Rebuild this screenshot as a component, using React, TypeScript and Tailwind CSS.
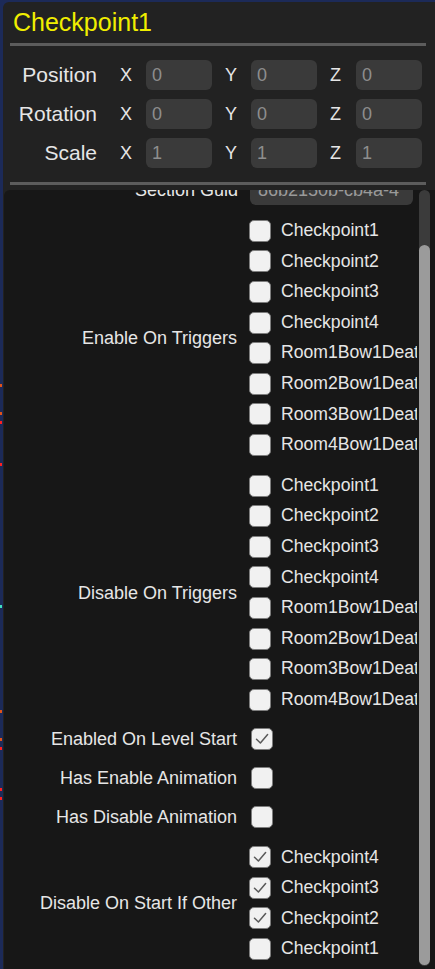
import React from "react";

const font = { fontFamily: '"Liberation Sans", Arial, sans-serif' };

function Check({ checked, className = "" }: { checked?: boolean; className?: string }) {
  return (
    <div
      className={
        "w-[22px] h-[22px] rounded-[5px] bg-[#f1f1f1] border border-[#7d7d7d] flex items-center justify-center shrink-0 " +
        className
      }
    >
      {checked && (
        <svg width="18" height="18" viewBox="0 0 18 18" fill="none">
          <path d="M3.5 9.2 L7.4 13 L14.6 4.6" stroke="#5a5a5a" strokeWidth="1.5" strokeLinecap="round" strokeLinejoin="round" />
        </svg>
      )}
    </div>
  );
}

function VecRow({ label, v }: { label: string; v: string }) {
  return (
    <div className="h-[39px] flex items-center">
      <div className="w-[94px] text-right text-[21px] text-[#e6e6e6] leading-none">{label}</div>
      <div className="flex ml-[23px] gap-[13px]">
        {["X", "Y", "Z"].map((a) => (
          <div key={a} className="flex items-center">
            <div className="w-[26px] text-[18px] text-[#e6e6e6] leading-none">{a}</div>
            <div className="w-[66px] h-[30px] rounded-[6px] bg-[#3a3a3a] flex items-center pl-[6px] text-[18px] text-[#8e8e8e] leading-none">
              {v}
            </div>
          </div>
        ))}
      </div>
    </div>
  );
}

function Group({ label, items }: { label: string; items: { t: string; c?: boolean }[] }) {
  return (
    <div className="flex items-center pt-[6px] pb-[4px]">
      <div className="w-[233px] shrink-0 text-right text-[18px] text-[#e6e6e6] leading-none">{label}</div>
      <div className="flex flex-col ml-[12px]">
        {items.map((it, i) => (
          <div key={i} className="h-[30.6px] flex items-center whitespace-nowrap">
            <Check checked={it.c} />
            <span className="ml-[10px] text-[17.6px] text-[#e6e6e6] leading-none">{it.t}</span>
          </div>
        ))}
      </div>
    </div>
  );
}

function Single({ label, checked }: { label: string; checked?: boolean }) {
  return (
    <div className="h-[39px] flex items-center">
      <div className="w-[233px] shrink-0 text-right text-[18px] text-[#e6e6e6] leading-none">{label}</div>
      <Check checked={checked} className="ml-[14px]" />
    </div>
  );
}

const triggers = [
  "Checkpoint1",
  "Checkpoint2",
  "Checkpoint3",
  "Checkpoint4",
  "Room1Bow1Death",
  "Room2Bow1Death",
  "Room3Bow1Death",
  "Room4Bow1Death",
].map((t) => ({ t }));

const marks = [
  { y: 384, c: "bg-[#e0531a]" },
  { y: 412, c: "bg-[#e0531a]" },
  { y: 421, c: "bg-[#ff2020]" },
  { y: 463, c: "bg-[#ff2020]" },
  { y: 605, c: "bg-[#40e0c0]" },
  { y: 710, c: "bg-[#e0531a]" },
  { y: 738, c: "bg-[#e0531a]" },
  { y: 747, c: "bg-[#ff2020]" },
  { y: 788, c: "bg-[#ff2020]" },
  { y: 797, c: "bg-[#ff2020]" },
];

export default function App() {
  return (
    <div className="relative w-[435px] h-[969px] bg-[#1c2a58] overflow-hidden" style={font}>
      {marks.map((m, i) => (
        <span key={i} className={"absolute left-0 w-[2px] h-[3px] " + m.c} style={{ top: m.y }} />
      ))}
      <div className="ml-[3px] mt-[2px] h-[967px] bg-[#222222] rounded-tl-[6px] flex flex-col">
        <div className="h-[41px] flex items-center pl-[10px] text-[25px] text-[#f0ee00] leading-none">Checkpoint1</div>
        <div className="ml-[7px] mr-[9px] h-[3px] bg-[#5c5c5c]" />
        <div className="pt-[9px]">
          <VecRow label="Position" v="0" />
          <VecRow label="Rotation" v="0" />
          <VecRow label="Scale" v="1" />
        </div>
        <div className="mt-[10px] ml-[7px] mr-[9px] h-[3px] bg-[#5c5c5c]" />
        <div className="mt-[5px] ml-[1px] flex-1 bg-[#171717] rounded-tl-[6px] flex overflow-hidden">
          <div className="w-[413px] overflow-hidden">
            <div className="mt-[-19.5px]">
              <div className="h-[39px] flex items-center">
                <div className="w-[234px] shrink-0 text-right text-[18px] text-[#e6e6e6] leading-none">Section Guid</div>
                <div className="ml-[12px] w-[163px] h-[30px] rounded-[6px] bg-[#3a3a3a] flex items-center pl-[8px] text-[18px] text-[#9a9a9a] leading-none whitespace-nowrap overflow-hidden">
                  86b2150b-cb4a-4
                </div>
              </div>
              <Group label="Enable On Triggers" items={triggers} />
              <Group label="Disable On Triggers" items={triggers} />
              <Single label="Enabled On Level Start" checked />
              <Single label="Has Enable Animation" />
              <Single label="Has Disable Animation" />
              <Group
                label="Disable On Start If Other"
                items={[
                  { t: "Checkpoint4", c: true },
                  { t: "Checkpoint3", c: true },
                  { t: "Checkpoint2", c: true },
                  { t: "Checkpoint1" },
                ]}
              />
            </div>
          </div>
          <div className="ml-[2px] w-[11px] h-[776px] rounded-full bg-[#3b3b3b] flex flex-col">
            <div className="mt-[55px] h-[720px] rounded-full bg-[#9b9b9b]" />
          </div>
        </div>
      </div>
    </div>
  );
}
